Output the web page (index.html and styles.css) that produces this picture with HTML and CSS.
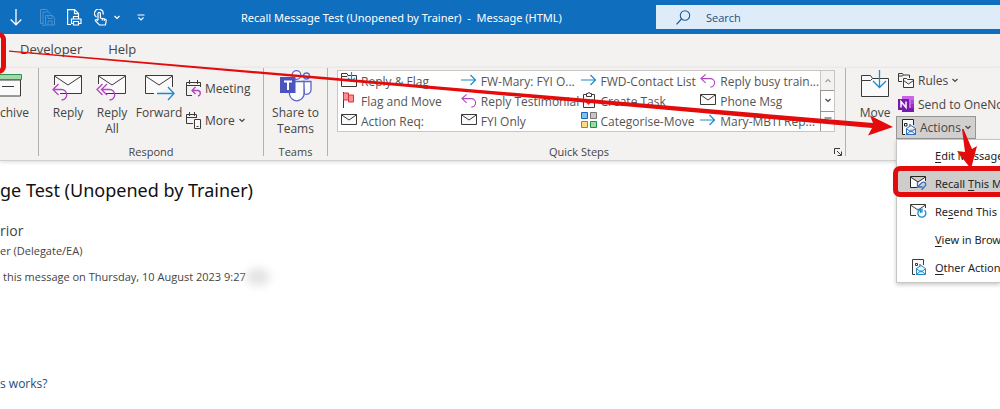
FILE: index.html
```
<!DOCTYPE html>
<html lang="en">
<head>
  <meta charset="UTF-8">
  <meta name="viewport" content="width=device-width, initial-scale=1.0">
  <title>Recall Message Test - Message (HTML)</title>
  <link rel="stylesheet" href="styles.css">
</head>
<body>
  <!-- shared icons -->
  <svg class="sprite" aria-hidden="true">
    <symbol id="envelope" viewBox="0 0 16 12">
      <path d="M.5 .5h15v10H.5z" fill="#fafafa" stroke="#3b3a39"/>
      <path d="M.5 .8 8 6 15.500 .8" fill="none" stroke="#3b3a39"/>
    </symbol>
    <symbol id="arrow-right" viewBox="0 0 16 12">
      <path d="M0 6h14.500M9.500 1l5 5-5 5" fill="none" stroke="#1e8bcd" stroke-width="1.200"/>
    </symbol>
    <symbol id="arrow-reply" viewBox="0 0 17 15">
      <path d="M6 1 1 5.500l5 4.500M1 5.500h10a4.500 4.500 0 0 1 0 9" fill="none" stroke="#b146c2" stroke-width="1.200"/>
    </symbol>
    <symbol id="chevron" viewBox="0 0 8 5">
      <path d="M1.500 1 4 3.500 6.500 1" fill="none" stroke="currentColor" stroke-width="1.200"/>
    </symbol>
  </svg>

  <header class="titlebar">
    <div class="quick-access">
      <button class="qa-btn" aria-label="Next item">
        <svg width="12" height="17" viewBox="0 0 12 17"><path d="M6 0v15.500M.7 10.500 6 15.800l5.300-5.300" fill="none" stroke="#fff" stroke-width="1.300"/></svg>
      </button>
      <button class="qa-btn faded" aria-label="Save as" disabled>
        <svg width="15" height="17" viewBox="0 0 15 17" fill="none" stroke="#fff"><path d="M3 14.500H.5V.5h6l2 2M5 16.500H3V3h5.500L11 5.500"/><path d="M5.500 6.500h7l2 2v7.500h-9zM8 6.500v3h4v-3M8 16v-4h4v4"/></svg>
      </button>
      <button class="qa-btn" aria-label="Quick print">
        <svg width="15" height="17" viewBox="0 0 15 17" fill="none" stroke="#fff" stroke-width="1.200"><path d="M4 15.500H.6V.6h7L11.500 4.500V7M7.500 .6v4h4"/><path d="M6.500 10V7.500h5V10M6.500 14.500h-2V10h9.500v4.500h-2M6.500 12.500h5v3.500h-5z"/></svg>
      </button>
      <button class="qa-btn" aria-label="Touch mode">
        <svg width="13" height="17" viewBox="0 0 13 17" fill="none" stroke="#fff" stroke-width="1.200"><path d="M2.500 8A4.300 4.300 0 1 1 9 5.500"/><path d="M4 11V4.500a1.200 1.200 0 0 1 2.400 0V9l4.500 1c1 .3 1.500 1 1.300 2l-.8 4H5.500L1.500 12c-.5-1 .8-1.800 1.500-1.200l1 1M8.300 9.500v2M10.300 10v2"/></svg>
      </button>
      <button class="qa-btn qa-drop" aria-label="Touch mode options"><svg width="8" height="5"><use href="#chevron"/></svg></button>
      <button class="qa-btn" aria-label="Customise toolbar">
        <svg width="8" height="7" viewBox="0 0 8 7"><path d="M.5 1h7M1.500 3.500 4 6l2.500-2.500" fill="none" stroke="#fff" stroke-width="1.200"/></svg>
      </button>
    </div>
    <h1 class="window-title">Recall Message Test (Unopened by Trainer) &nbsp;-&nbsp; Message (HTML)</h1>
    <div class="search">
      <label for="search" aria-label="Search">
        <svg width="15" height="15" viewBox="0 0 15 15"><circle cx="9" cy="5.500" r="4.700" fill="none" stroke="#1b5a8f" stroke-width="1.100"/><path d="M5.500 9 .5 14.300" stroke="#1b5a8f" stroke-width="1.200"/></svg>
      </label>
      <input type="text" id="search" placeholder="Search">
    </div>
  </header>

  <nav class="tabs">
    <button class="tab">Developer</button>
    <button class="tab">Help</button>
  </nav>

  <section class="ribbon">
    <div class="group group-archive">
      <div class="group-body">
        <button class="big-btn">
          <svg width="22" height="28" viewBox="0 0 22 28"><path d="M0 6h20.500v16H0" fill="#fafafa" stroke="#3b3a39"/><path d="M-1 .5h22.500v5H-1z" fill="#a0d8a8" stroke="#2f9350"/><path d="M2 12.500h12" stroke="#3b3a39"/></svg>
          chive
        </button>
      </div>
    </div>

    <div class="group group-respond">
      <div class="group-body">
        <button class="big-btn">
          <svg width="32" height="28" viewBox="0 0 32 28"><path d="M8 19.500h21.500v-18h-27V11" fill="#fafafa" stroke="#3b3a39"/><path d="M2.500 2 16 11 29.500 2" fill="none" stroke="#3b3a39"/><path d="M6.500 10 1 15.500 6.500 21M1 15.500h8.500a5 5 0 0 1 0 10.500" fill="none" stroke="#b146c2" stroke-width="1.300"/></svg>
          Reply
        </button>
        <button class="big-btn">
          <svg width="32" height="28" viewBox="0 0 32 28"><path d="M10 19.500h19.500v-18h-27V10" fill="#fafafa" stroke="#3b3a39"/><path d="M2.500 2 16 11 29.500 2" fill="none" stroke="#3b3a39"/><path d="M6.500 10 1 15.500 6.500 21M11 10 5.500 15.500 11 21M5.500 15.500h8a5 5 0 0 1 0 10.500" fill="none" stroke="#b146c2" stroke-width="1.300"/></svg>
          Reply<br>All
        </button>
        <button class="big-btn wide">
          <svg width="32" height="28" viewBox="0 0 32 28"><path d="M11 19.500H2.500v-18h27V13" fill="#fafafa" stroke="#3b3a39"/><path d="M2.500 2 16 11 29.500 2" fill="none" stroke="#3b3a39"/><path d="M14 19.500h16.500M25 13l6 6.500-6 6.500" fill="none" stroke="#1e8bcd" stroke-width="1.300"/></svg>
          Forward
        </button>
        <div class="small-col spaced">
          <button class="small-btn">
            <svg width="17" height="17" viewBox="0 0 17 17" fill="none" stroke="#3b3a39"><path d="M7 15.500H1.500v-13h14V7M1.500 5.500h14M4.500 0v4M12.500 0v4"/><path d="M10.500 7 7 10.500l3.500 3.500M7 10.500h6a2.800 2.800 0 0 1 0 5.500" stroke="#b146c2" stroke-width="1.300"/></svg>
            Meeting
          </button>
          <button class="small-btn">
            <svg width="17" height="17" viewBox="0 0 17 17" fill="none" stroke="#3b3a39"><path d="M8 11.500H1.500v-9h10V6M1.500 5.500h10M4.500 0v4M9.500 0v4"/><path d="M9.500 7.500h6v9h-6z" fill="#fafafa"/><path d="M11.500 14.500h2"/></svg>
            More <svg width="8" height="5"><use href="#chevron"/></svg>
          </button>
        </div>
      </div>
      <div class="group-name">Respond</div>
    </div>

    <div class="group group-teams">
      <div class="group-body">
        <button class="big-btn">
          <svg width="34" height="32" viewBox="0 0 34 32"><g fill="#fafafa" stroke="#5b66c9" stroke-width="1.300"><circle cx="27.500" cy="6" r="3"/><path d="M24 11.500h8V20c0 3-3 5-6.500 4z"/><circle cx="17.500" cy="5" r="4.300"/><path d="M10 11.500h15v11a7 7 0 0 1-14.500 2z"/></g><path d="M1 7h15.500v16H1z" fill="#4b53bc"/><path d="M5 11.500h8M9 11.500V20" stroke="#fff" stroke-width="2"/></svg>
          Share to<br>Teams
        </button>
      </div>
      <div class="group-name">Teams</div>
    </div>

    <div class="group group-steps">
      <div class="group-body">
        <div class="gallery">
          <div class="steps">
            <button class="step"><svg width="16" height="16" viewBox="0 0 16 16"><path d="M.5 14.500V1.500H6l1 2h8.500v11z" fill="#fafafa" stroke="#3b3a39"/><path d="M.5 4.500H6l1-1" fill="none" stroke="#3b3a39"/><path d="M10.500 0v9M7 6l3.500 3.500L14 6" fill="none" stroke="#1e8bcd" stroke-width="1.200"/></svg>Reply &amp; Flag</button>
            <button class="step"><svg width="16" height="12"><use href="#arrow-right"/></svg>FW-Mary: FYI O...</button>
            <button class="step"><svg width="16" height="12"><use href="#arrow-right"/></svg>FWD-Contact List</button>
            <button class="step"><svg width="17" height="15"><use href="#arrow-reply"/></svg>Reply busy train...</button>
            <button class="step"><svg width="16" height="16" viewBox="0 0 16 16"><path d="M2.500 0v16" stroke="#3b3a39"/><path d="M2.500 1h5v7h-5zM7.500 3h5v7h-5z" fill="#ff8f92" stroke="#d13438"/></svg>Flag and Move</button>
            <button class="step"><svg width="17" height="15"><use href="#arrow-reply"/></svg>Reply Testimonial</button>
            <button class="step"><svg width="16" height="16" viewBox="0 0 16 16"><path d="M2.500 2.500h11v13h-11z" fill="#fafafa" stroke="#3b3a39"/><path d="M5.500 4.500v-3H7a1 1 0 0 1 2 0h1.500v3z" fill="#fafafa" stroke="#3b3a39"/><path d="m5 9.500 2.500 2.500L12 7.500" fill="none" stroke="#d13438" stroke-width="1.300"/></svg>Create Task</button>
            <button class="step"><svg width="16" height="12"><use href="#envelope"/></svg>Phone Msg</button>
            <button class="step"><svg width="16" height="12"><use href="#envelope"/></svg>Action Req:</button>
            <button class="step"><svg width="16" height="12"><use href="#envelope"/></svg>FYI Only</button>
            <button class="step"><svg width="16" height="16" viewBox="0 0 16 16"><path d="M.5 .5h6v6h-6z" fill="#83beec" stroke="#0f6cbd"/><path d="M9.500 .5h6v6h-6z" fill="#c8c6c4" stroke="#797775"/><path d="M.5 9.500h6v6h-6z" fill="#ffd98a" stroke="#e06c00"/><path d="M9.500 9.500h6v6h-6z" fill="#9fd8a8" stroke="#1f9044"/></svg>Categorise-Move</button>
            <button class="step"><svg width="16" height="12"><use href="#arrow-right"/></svg>Mary-MBTI Rep...</button>
          </div>
          <div class="scroller">
            <button class="scroll-btn up" aria-label="Previous row" disabled><svg width="8" height="5" viewBox="0 0 8 5"><path d="M1.500 4 4 1.500 6.500 4" fill="none" stroke="currentColor" stroke-width="1.200"/></svg></button>
            <button class="scroll-btn" aria-label="Next row"><svg width="8" height="5"><use href="#chevron"/></svg></button>
            <button class="scroll-btn" aria-label="All quick steps"><svg width="8" height="8" viewBox="0 0 8 8"><path d="M.5 1h7M1.500 4 4 6.500 6.500 4" fill="none" stroke="#3b3a39" stroke-width="1.200"/></svg></button>
          </div>
        </div>
      </div>
      <div class="group-name">Quick Steps</div>
      <button class="launcher" aria-label="Manage quick steps"><svg width="8" height="8" viewBox="0 0 8 8"><path d="M.5 6V.5H6M3 3l4 4M7.500 3.500v4h-4" fill="none" stroke="#3b3a39"/></svg></button>
    </div>

    <div class="group group-move">
      <div class="group-body">
        <button class="big-btn">
          <svg width="30" height="28" viewBox="0 0 30 28"><path d="M1.500 27.500V6.500h9l2 3h16v18z" fill="#fafafa" stroke="#3b3a39"/><path d="M1.500 11.500h9l2-2" fill="none" stroke="#3b3a39"/><path d="M19.500 1v17.500M13 12l6.500 6.500L26 12" fill="none" stroke="#1e8bcd" stroke-width="1.300"/></svg>
          Move
        </button>
        <div class="small-col">
          <button class="small-btn">
            <svg width="17" height="17" viewBox="0 0 17 17" fill="#fafafa" stroke="#3b3a39"><path d="M4 9.500H.5v-8h4l1 1.500h6V6M.5 4h4l1-1" fill="none"/><path d="M5.500 15.500v-9h3l1 1h6v8zM5.500 8.500l5 3.500 5-3.500"/></svg>
            Rules <svg width="8" height="5"><use href="#chevron"/></svg>
          </button>
          <button class="small-btn">
            <svg width="17" height="17" viewBox="0 0 17 17"><path d="M4 0h12v16H4z" fill="#ca64ea"/><path d="M13 4h3v4h-3z" fill="#ae4bd5"/><path d="M13 8h3v4h-3z" fill="#9332bf"/><path d="M4 12h12v4H4z" fill="#7719aa"/><path d="M0 3h11v11H0z" fill="#7719aa"/><path d="M3 11.500v-6l5 6v-6" fill="none" stroke="#fff" stroke-width="1.500"/></svg>
            Send to OneNot
          </button>
          <div class="actions">
            <button class="small-btn open" aria-expanded="true">
              <svg width="17" height="17" viewBox="0 0 17 17"><path d="M5 15.500H2.500V.5h11V6" fill="#fafafa" stroke="#252423"/><path d="M4.500 4.500h2.500v2.500H4.500zM9 6h2" fill="none" stroke="#252423"/><path d="M6.500 9.500 11 6.500l4.500 3v6h-9zM6.500 15.500 11 11.500l4.500 4M6.500 9.800 11 13l4.500-3.200" fill="#e8f2fb" stroke="#2b6fc0"/></svg>
              Actions <svg width="8" height="5"><use href="#chevron"/></svg>
            </button>
            <div class="menu" role="menu">
              <button class="menu-item" role="menuitem"><span class="menu-icon"></span><span><u>E</u>dit Message</span></button>
              <button class="menu-item active" role="menuitem"><span class="menu-icon"><svg width="17" height="14" viewBox="0 0 17 14"><path d="M7 11.500H.5V.5h15V5M.5 1 8 6l7.500-5" fill="#fafafa" stroke="#252423"/><path d="M7.500 6v5h5M7.500 11 11.500 7c2.500-2 5 0 4 2.500L11.500 14" fill="none" stroke="#3a6fc0" stroke-width="1.300"/></svg></span><span>Recall <u>T</u>his M</span></button>
              <button class="menu-item" role="menuitem"><span class="menu-icon"><svg width="17" height="14" viewBox="0 0 17 14"><path d="M6 11.500H.5V.5h15V4M.5 1 8 6l7.500-5" fill="#fafafa" stroke="#3b3a39"/><path d="M9.500 6A4 4 0 1 0 14.500 6.200M7 5.500h3.500v3.500M12 4.500v4" fill="none" stroke="#1e8bcd" stroke-width="1.300"/></svg></span><span>Re<u>s</u>end This</span></button>
              <button class="menu-item" role="menuitem"><span class="menu-icon"></span><span><u>V</u>iew in Brow</span></button>
              <button class="menu-item" role="menuitem"><span class="menu-icon"><svg width="17" height="17" viewBox="0 0 17 17"><path d="M5 15.500H2.500V.5h11V6" fill="#fafafa" stroke="#3b3a39"/><path d="M5.500 4.500h2v2h-2zM9 6h2" fill="none" stroke="#3b3a39"/><path d="M6.500 9.500 11 6.500l4.500 3v6h-9zM6.500 15.500 11 11.500l4.500 4M6.500 9.800 11 13l4.500-3.200" fill="#e8f2fb" stroke="#1e8bcd"/></svg></span><span><u>O</u>ther Action</span></button>
            </div>
          </div>
        </div>
      </div>
    </div>
  </section>

  <main class="message">
    <h2 class="subject">ge Test (Unopened by Trainer)</h2>
    <p class="sender">rior</p>
    <p class="role">er (Delegate/EA)</p>
    <p class="info">this message on Thursday, 10 August 2023 9:27<span class="smudge"></span></p>
    <p class="body-text">s works?</p>
  </main>

  <!-- red callouts drawn over the window -->
  <svg class="callouts" width="1000" height="409" viewBox="0 0 1000 409" aria-hidden="true">
    <rect x="-20" y="34.500" width="23.500" height="37" rx="5" fill="none" stroke="#e30b0b" stroke-width="5"/>
    <path d="M9 50.500 873 123l-3-7.500L893 127l-25 8.500 4-7.500L9 51.700z" fill="#e30b0b"/>
    <path d="M1005 168.500H900a4.500 4.500 0 0 0-4.500 4.500v17a4.500 4.500 0 0 0 4.500 4.500h105" fill="none" stroke="#e30b0b" stroke-width="5"/>
    <path d="M962 129h1.500L972 149l5-3-6 23-14-18 8 1z" fill="#e30b0b"/>
  </svg>
</body>
</html>
```
FILE: styles.css
```
* {
  box-sizing: border-box;
}
body {
  margin: 0;
  min-height: 100vh;
  overflow: hidden;
  position: relative;
  background: #fff;
  color: #444;
  font-family: 'Open Sans', 'Noto Sans', sans-serif;
  font-size: 12px;
}
button {
  border: none;
  padding: 0;
  background: none;
  color: inherit;
  font: inherit;
  white-space: nowrap;
}
svg {
  flex: none;
}
.sprite {
  position: absolute;
  width: 0;
  height: 0;
}

/* title bar */
.titlebar {
  display: flex;
  align-items: center;
  height: 34px;
  background: #106ebe;
  color: #fff;
}
.quick-access {
  display: flex;
  align-items: center;
  gap: 12px;
  width: 241px;
  padding-left: 10px;
}
.qa-btn {
  display: flex;
}
.qa-btn:first-child {
  margin-right: 6px;
}
.qa-drop {
  margin: 0 4px 0 -6px;
}
.faded {
  opacity: 0.25;
}
.window-title {
  flex: 1;
  margin: 0;
  font-family: 'Noto Sans', 'Open Sans', sans-serif;
  font-size: 11px;
  font-weight: 400;
  white-space: nowrap;
}
.search {
  display: flex;
  align-items: center;
  gap: 15px;
  width: 34.4%;
  height: 24px;
  padding-left: 20px;
  background: #deecf9;
}
.search label {
  display: flex;
}
.search input {
  flex: 1;
  min-width: 0;
  padding: 0;
  border: none;
  outline: none;
  background: none;
  font: inherit;
  font-size: 11px;
}
.search input::placeholder {
  color: #1b4f7f;
  opacity: 1;
}

/* ribbon */
.tabs {
  display: flex;
  gap: 26px;
  height: 34px;
  padding: 0 20px;
  background: #f3f2f1;
  font-size: 13px;
}
.tab {
  height: 30px;
}
.ribbon {
  display: flex;
  height: 93px;
  padding-bottom: 4px;
  background: #f3f2f1;
  border-bottom: 1px solid #d2d0ce;
  box-shadow: 0 1px 4px rgba(0, 0, 0, 0.15);
}
.group {
  display: flex;
  flex-direction: column;
  flex: none;
  position: relative;
  border-right: 1px solid #b3b0ad;
}
.group-body {
  display: flex;
  flex: 1;
}
.group-name {
  line-height: 14px;
  margin-bottom: -3px;
  text-align: center;
  font-size: 11px;
}
.group-archive {
  width: 39px;
}
.group-respond {
  width: 225px;
  padding: 0 7px;
}
.group-teams {
  width: 64px;
}
.group-steps {
  flex: 1;
  padding: 0 10px 0 9px;
}
.group-steps .group-name {
  padding-right: 14px;
}
.group-move {
  width: 154px;
  padding-left: 7px;
  border-right: none;
}
.big-btn {
  display: flex;
  flex: none;
  flex-direction: column;
  align-items: center;
  width: 44px;
  height: 70px;
  line-height: 16px;
}
.big-btn svg {
  height: 28px;
  margin: 6px 0 3px;
}
.big-btn.wide {
  width: 50px;
}
.group-archive .big-btn {
  width: 28px;
  align-items: flex-start;
}
.group-teams .big-btn {
  width: 100%;
}
.group-teams .big-btn svg {
  height: 32px;
  margin: 2px 0 3px;
}
.group-move .big-btn svg {
  margin: 1px 0 8px;
}
.small-col {
  display: flex;
  flex-direction: column;
}
.small-col.spaced {
  gap: 8px;
  padding: 8px 0 0 1px;
}
.small-btn {
  display: flex;
  align-items: center;
  gap: 3px;
  height: 24px;
}
.group-move .small-col {
  margin-left: 1px;
}
.gallery {
  display: flex;
  flex: 1;
  height: 62px;
  margin-top: 2px;
  background: #fff;
  border: 1px solid #c8c6c4;
}
.steps {
  display: grid;
  grid-template-columns: repeat(4, 1fr);
  grid-auto-rows: 20px;
  flex: 1;
  padding: 1px 0 0 3px;
}
.step {
  display: flex;
  align-items: center;
  gap: 4px;
  height: 20px;
  color: #555;
  line-height: 20px;
}
.step svg {
  width: 16px;
  margin-bottom: 4px;
}
.scroller {
  display: flex;
  flex-direction: column;
  width: 14px;
}
.scroll-btn {
  display: flex;
  flex: 1;
  align-items: center;
  justify-content: center;
  background: #fdfdfd;
  border: 1px solid #979593;
  border-width: 1px 0 0 1px;
}
.scroll-btn.up {
  background: #f3f2f1;
  border-color: #c8c6c4;
  border-top: none;
  color: #a19f9d;
}
.launcher {
  display: flex;
  position: absolute;
  right: 3px;
  bottom: 0;
}

/* actions menu */
.actions {
  position: relative;
  align-self: flex-start;
}
.small-btn.open {
  height: 23px;
  width: 80px;
  padding-left: 3px;
  margin-left: -2px;
  background: #d2d0ce;
  border: 1px solid #979593;
}
.menu {
  position: absolute;
  top: 100%;
  left: -2px;
  z-index: 2;
  width: 104px;
  padding: 1px 0;
  background: #fff;
  border: 1px solid #c8c6c4;
  border-right: none;
  box-shadow: 0 2px 4px rgba(0, 0, 0, 0.2);
  color: #252423;
  font-family: 'Noto Sans', 'Open Sans', sans-serif;
  font-size: 11px;
  overflow: hidden;
}
.menu-item {
  display: flex;
  align-items: center;
  width: 100%;
  height: 28px;
  text-align: left;
}
.menu-item.active {
  background: #cfcdcb;
}
.menu-item u {
  text-underline-offset: 2px;
}
.menu-icon {
  display: flex;
  flex: none;
  width: 38px;
  padding-left: 13px;
}

/* message */
.message p {
  margin: 0;
}
.subject {
  margin: 16px 0 18px;
  color: #111;
  font-family: 'Noto Sans', 'Open Sans', sans-serif;
  font-size: 18px;
  line-height: 26px;
  font-weight: 400;
}
.message .sender {
  font-size: 14px;
  line-height: 20px;
}
.message .role {
  margin-top: 1px;
  font-size: 11px;
  line-height: 18px;
}
.info {
  display: flex;
  padding: 8px 0 0 3px;
  font-size: 11px;
  line-height: 18px;
}
.smudge {
  width: 24px;
  height: 18px;
  border-radius: 50%;
  background: #e4e4e4;
  filter: blur(4px);
}
.message .body-text {
  margin-top: 88px;
  color: #1f4e79;
  font-size: 12px;
  line-height: 20px;
}

.callouts {
  position: absolute;
  top: 0;
  left: 0;
  z-index: 3;
  pointer-events: none;
}
```
